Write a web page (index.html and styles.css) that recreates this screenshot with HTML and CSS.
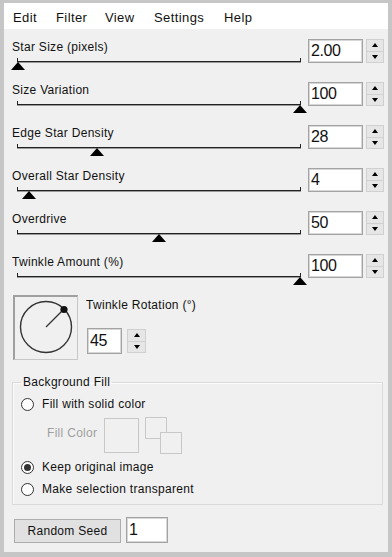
FILE: index.html
```html
<!DOCTYPE html>
<html lang="en">
<head>
    <meta charset="UTF-8">
    <title>Star Effect</title>
    <link rel="stylesheet" href="styles.css">
</head>
<body>
    <div class="window">
        <div class="menubar">
            <span class="menu-item">Edit</span>
            <span class="menu-item">Filter</span>
            <span class="menu-item">View</span>
            <span class="menu-item">Settings</span>
            <span class="menu-item">Help</span>
        </div>

        <div class="sliders">
            <div class="row">
                <div class="slider">
                    <div class="label">Star Size (pixels)</div>
                    <div class="track"><span class="thumb" style="left: 0%"></span></div>
                </div>
                <input class="num" type="text" value="2.00">
                <div class="spin"><span class="spin-btn up"></span><span class="spin-btn down"></span></div>
            </div>
            <div class="row">
                <div class="slider">
                    <div class="label">Size Variation</div>
                    <div class="track"><span class="thumb" style="left: 100%"></span></div>
                </div>
                <input class="num" type="text" value="100">
                <div class="spin"><span class="spin-btn up"></span><span class="spin-btn down"></span></div>
            </div>
            <div class="row">
                <div class="slider">
                    <div class="label">Edge Star Density</div>
                    <div class="track"><span class="thumb" style="left: 28%"></span></div>
                </div>
                <input class="num" type="text" value="28">
                <div class="spin"><span class="spin-btn up"></span><span class="spin-btn down"></span></div>
            </div>
            <div class="row">
                <div class="slider">
                    <div class="label">Overall Star Density</div>
                    <div class="track"><span class="thumb" style="left: 4%"></span></div>
                </div>
                <input class="num" type="text" value="4">
                <div class="spin"><span class="spin-btn up"></span><span class="spin-btn down"></span></div>
            </div>
            <div class="row">
                <div class="slider">
                    <div class="label">Overdrive</div>
                    <div class="track"><span class="thumb" style="left: 50%"></span></div>
                </div>
                <input class="num" type="text" value="50">
                <div class="spin"><span class="spin-btn up"></span><span class="spin-btn down"></span></div>
            </div>
            <div class="row">
                <div class="slider">
                    <div class="label">Twinkle Amount (%)</div>
                    <div class="track"><span class="thumb" style="left: 100%"></span></div>
                </div>
                <input class="num" type="text" value="100">
                <div class="spin"><span class="spin-btn up"></span><span class="spin-btn down"></span></div>
            </div>
        </div>

        <div class="twinkle">
            <div class="dial">
                <svg width="61" height="61" viewBox="0 0 61 61">
                    <circle cx="31" cy="30" r="25.5" fill="none" stroke="#333" stroke-width="1.4"/>
                    <line x1="31" y1="30" x2="49" y2="12" stroke="#333" stroke-width="1.3"/>
                    <circle cx="49" cy="12.5" r="3.6" fill="#111"/>
                </svg>
            </div>
            <div class="rot">
                <div class="label">Twinkle Rotation (°)</div>
                <div class="rot-input">
                    <input class="num small" type="text" value="45">
                    <div class="spin small"><span class="spin-btn up"></span><span class="spin-btn down"></span></div>
                </div>
            </div>
        </div>

        <fieldset class="group">
            <legend>Background Fill</legend>
            <label class="radio-row first"><span class="radio"></span>Fill with solid color</label>
            <div class="fill-row">
                <span class="fill-label">Fill Color</span>
                <span class="swatch"></span>
                <span class="swap">
                    <span class="swap-box back"></span>
                    <span class="swap-box front"></span>
                </span>
            </div>
            <label class="radio-row"><span class="radio checked"></span>Keep original image</label>
            <label class="radio-row"><span class="radio"></span>Make selection transparent</label>
        </fieldset>

        <div class="seed-row">
            <button class="btn">Random Seed</button>
            <input class="num seed" type="text" value="1">
        </div>
    </div>
</body>
</html>
```

FILE: styles.css
```css
* {
    margin: 0;
    padding: 0;
    box-sizing: border-box;
}

body {
    font-family: "Liberation Sans", Arial, sans-serif;
    font-size: 12px;
    letter-spacing: 0.3px;
    color: #111;
    background: #c6c6c6;
}

.window {
    width: 392px;
    height: 557px;
    border-style: solid;
    border-color: #c6c6c6;
    border-width: 3px 4px 5px 4px;
    background: #f0f0f0;
}

/* menu */
.menubar {
    height: 26px;
    background: #fff;
    display: grid;
    grid-template-columns: 43px 49px 49px 70px auto;
    align-items: center;
    padding: 2px 0 0 9px;
    font-size: 13px;
    letter-spacing: 0.4px;
}

/* slider rows */
.sliders {
    padding-top: 5px;
}

.row {
    display: flex;
    height: 43px;
    padding-left: 8px;
}

.slider {
    width: 296px;
    padding-top: 5px;
}

.label {
    line-height: 16px;
    white-space: nowrap;
}

.track {
    position: relative;
    width: 284px;
    height: 4px;
    margin: 3px 0 0 5px;
    border-left: 1px solid #222;
    border-right: 1px solid #222;
    border-bottom: 1px solid #222;
    box-shadow: 0 1px 0 #9a9a9a;
}

.thumb {
    position: absolute;
    top: 4px;
    width: 0;
    height: 0;
    margin-left: -7px;
    border-left: 7px solid transparent;
    border-right: 7px solid transparent;
    border-bottom: 8px solid #000;
}

.num {
    width: 55px;
    height: 24px;
    margin-top: 5px;
    padding: 0 2px;
    font-family: "Liberation Sans", Arial, sans-serif;
    font-size: 16px;
    letter-spacing: -0.4px;
    color: #111;
    background: #fff;
    border: 1px solid #a3a3a3;
    box-shadow: inset 0 0 0 1px #d7d7d7;
    outline: none;
}

.spin {
    display: flex;
    flex-direction: column;
    width: 18px;
    height: 24px;
    margin: 5px 0 0 3px;
}

.spin-btn {
    flex: 1;
    display: flex;
    align-items: center;
    justify-content: center;
    background: #e6e6e6;
    border: 1px solid #d0d0d0;
}

.spin-btn + .spin-btn {
    border-top: none;
}

.spin-btn::after {
    content: "";
    width: 0;
    height: 0;
    border-left: 3.5px solid transparent;
    border-right: 3.5px solid transparent;
}

.up::after {
    border-bottom: 4px solid #000;
}

.down::after {
    border-top: 4px solid #000;
}

/* twinkle rotation */
.twinkle {
    display: flex;
    margin-top: 3px;
    padding-left: 9px;
}

.dial {
    width: 65px;
    height: 65px;
    border-style: solid;
    border-width: 2px 1px 1px 2px;
    border-color: #a0a0a0 #c8c8c8 #c8c8c8 #a0a0a0;
    background: #f0f0f0;
}

.dial svg {
    display: block;
}

.rot {
    margin-left: 8px;
    padding-top: 2px;
}

.rot-input {
    display: flex;
    margin-top: 15px;
    margin-left: 1px;
}

.num.small {
    width: 35px;
    height: 26px;
    margin-top: 0;
}

.spin.small {
    width: 19px;
    height: 24px;
    margin: 1px 0 0 5px;
}

/* background fill group */
.group {
    margin: 14px 5px 0 8px;
    padding: 0 8px 6px 8px;
    border: 1px solid #dadada;
    box-shadow: inset 1px 1px 0 #fafafa;
}

.group legend {
    padding: 0 2px;
    line-height: 16px;
}

.radio-row {
    display: flex;
    align-items: center;
    height: 18px;
    margin-top: 4px;
}

.radio-row.first {
    margin-top: 5px;
}

.radio {
    position: relative;
    width: 13px;
    height: 13px;
    margin-right: 8px;
    border: 1px solid #333;
    border-radius: 50%;
    background: #fff;
}

.radio.checked::after {
    content: "";
    position: absolute;
    left: 2px;
    top: 2px;
    width: 7px;
    height: 7px;
    border-radius: 50%;
    background: #333;
}

.fill-row {
    display: flex;
    align-items: flex-start;
    padding-top: 4px;
}

.fill-label {
    width: 57px;
    margin: 8px 0 0 26px;
    line-height: 16px;
    color: #a0a0a0;
}

.swatch {
    width: 35px;
    height: 35px;
    margin-top: 1px;
    border: 1px solid #c8c8c8;
}

.swap {
    position: relative;
    width: 37px;
    height: 37px;
    margin-left: 6px;
}

.swap-box {
    position: absolute;
    width: 22px;
    height: 22px;
    border: 1px solid #c8c8c8;
    background: #f0f0f0;
}

.swap-box.back {
    left: 0;
    top: 0;
}

.swap-box.front {
    left: 15px;
    top: 15px;
}

/* seed */
.seed-row {
    display: flex;
    margin-top: 12px;
    padding-left: 10px;
}

.btn {
    width: 107px;
    height: 24px;
    margin-top: 2px;
    font-family: "Liberation Sans", Arial, sans-serif;
    font-size: 12px;
    letter-spacing: 0.3px;
    color: #111;
    background: #e1e1e1;
    border: 1px solid #adadad;
}

.num.seed {
    width: 42px;
    height: 26px;
    margin: 0 0 0 5px;
}
```
